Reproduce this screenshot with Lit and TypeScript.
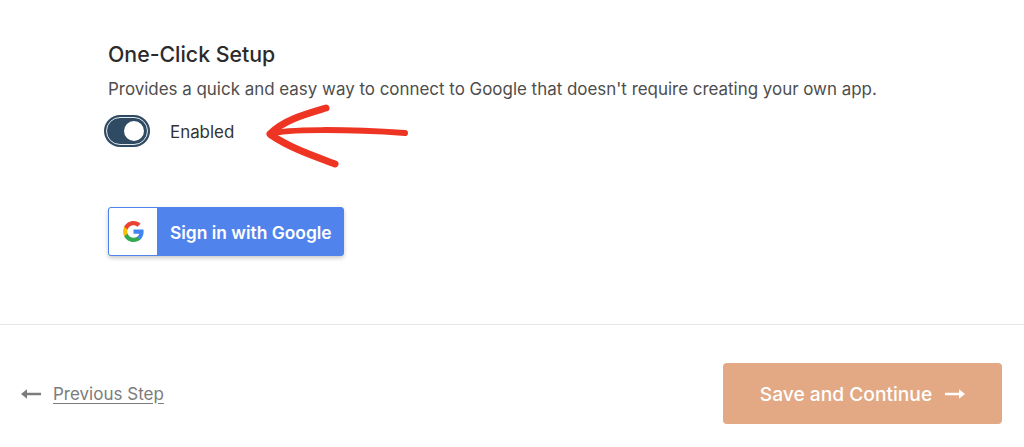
import { LitElement, html, css, svg } from "lit";
import { customElement } from "lit/decorators.js";

@customElement("app-root")
export class AppRoot extends LitElement {
  static styles = css`
    :host {
      display: block;
      position: relative;
      width: 1024px;
      height: 447px;
      background: #fff;
      overflow: hidden;
      font-family: Inter, "Liberation Sans", sans-serif;
      color: #444;
    }
    .content {
      height: 324px;
      box-sizing: border-box;
      padding: 41px 108px 0;
      display: flex;
      flex-direction: column;
      align-items: flex-start;
    }
    h2 {
      margin: 0;
      font-size: 21.3px;
      line-height: 26px;
      font-weight: 500;
      color: #2b2b2b;
    }
    .desc {
      margin: 9px 0 0;
      font-size: 16.93px;
      line-height: 26px;
      color: #4d4d4d;
      white-space: nowrap;
    }
    .toggle-row {
      display: flex;
      align-items: center;
      gap: 20px;
      margin: 12px 0 0 -4px;
      height: 33px;
      font-size: 16.9px;
      color: #333;
    }
    .toggle-label {
      padding-top: 2px;
    }
    .toggle {
      box-sizing: border-box;
      width: 46px;
      height: 32px;
      padding: 2px;
      border-radius: 16px;
      background: #2f4b63;
      display: flex;
    }
    .toggle-inner {
      box-sizing: border-box;
      flex: 1;
      border: 1.5px solid #e4e9ee;
      border-radius: 14px;
      background: #2f4b63;
      display: flex;
      align-items: center;
      justify-content: flex-end;
      padding-right: 3px;
    }
    .knob {
      width: 20px;
      height: 20px;
      border-radius: 50%;
      background: #fff;
    }
    .google {
      margin-top: 60px;
      box-sizing: border-box;
      width: 236px;
      height: 49px;
      display: flex;
      align-items: stretch;
      background: #5084ec;
      border: 1px solid #5084ec;
      border-radius: 3px;
      box-shadow: 0 2px 4px rgba(0, 0, 0, 0.22);
    }
    .g-box {
      width: 48px;
      background: #fff;
      border-radius: 2px 0 0 2px;
      display: flex;
      align-items: center;
      justify-content: center;
    }
    .g-label {
      flex: 1;
      display: flex;
      align-items: center;
      padding: 1px 0 0 13px;
      font-size: 17.4px;
      font-weight: 600;
      color: #fff;
      white-space: nowrap;
    }
    .footer {
      border-top: 1.5px solid #e6e6e6;
      box-sizing: border-box;
      height: 123px;
      padding: 38px 22px 0 21px;
      display: flex;
      justify-content: space-between;
      align-items: flex-start;
    }
    .prev {
      display: flex;
      align-items: center;
      gap: 12px;
      height: 61px;
      font-size: 17px;
      color: #7c7c7c;
    }
    .prev span {
      text-decoration: underline;
      text-underline-offset: 3px;
    }
    .next {
      box-sizing: border-box;
      width: 279px;
      height: 61px;
      border-radius: 4px;
      background: #e2a984;
      color: #fff;
      display: flex;
      align-items: center;
      justify-content: center;
      gap: 13px;
      font-size: 19.2px;
      font-weight: 500;
      white-space: nowrap;
    }
    .arrow {
      position: absolute;
      left: 0;
      top: 0;
      pointer-events: none;
    }
  `;

  render() {
    return html`
      <div class="content">
        <h2>One-Click Setup</h2>
        <p class="desc">Provides a quick and easy way to connect to Google that doesn't require creating your own app.</p>
        <div class="toggle-row">
          <div class="toggle"><div class="toggle-inner"><div class="knob"></div></div></div>
          <div class="toggle-label">Enabled</div>
        </div>
        <div class="google">
          <div class="g-box">
            <svg width="23" height="23" viewBox="0 0 48 48">
              <path fill="#4285F4" d="M45.1 24.5c0-1.6-.1-3.1-.4-4.5H24v8.5h11.8c-.5 2.7-2.1 5-4.4 6.6v5.5h7.1c4.2-3.8 6.6-9.5 6.6-16.1z"/>
              <path fill="#34A853" d="M24 46c5.9 0 10.9-2 14.5-5.3l-7.1-5.5c-2 1.3-4.5 2.1-7.4 2.1-5.7 0-10.5-3.8-12.2-9H4.5v5.7C8.1 41.1 15.5 46 24 46z"/>
              <path fill="#FBBC05" d="M11.8 28.3c-.4-1.3-.7-2.8-.7-4.3s.3-3 .7-4.3V14H4.5C3 17 2.2 20.4 2.2 24s.8 7 2.3 10l7.3-5.7z"/>
              <path fill="#EA4335" d="M24 10.7c3.2 0 6.1 1.1 8.4 3.3l6.3-6.3C34.9 4.2 29.9 2 24 2 15.5 2 8.1 6.9 4.5 14l7.3 5.7c1.7-5.2 6.5-9 12.2-9z"/>
            </svg>
          </div>
          <div class="g-label">Sign in with Google</div>
        </div>
      </div>
      <div class="footer">
        <div class="prev">
          <svg width="20" height="12" viewBox="0 0 20 12">
            <path d="M0 6 L6 1.2 V4.8 H20 V7.2 H6 V10.8 Z" fill="#7c7c7c"/>
          </svg>
          <span>Previous Step</span>
        </div>
        <div class="next">
          <div>Save and Continue</div>
          <svg width="20" height="12" viewBox="0 0 20 12">
            <path d="M20 6 L14 1.2 V4.8 H0 V7.2 H14 V10.8 Z" fill="#fff"/>
          </svg>
        </div>
      </div>
      <svg class="arrow" width="1024" height="447" viewBox="0 0 1024 447">
        ${svg`<g fill="none" stroke="#ee3524" stroke-linecap="round" stroke-linejoin="round">
          <path stroke-width="7" d="M326 108 C306 114 283 120 270 134"/>
          <path stroke-width="6" d="M270 134 C286 129 345 129 405 133"/>
          <path stroke-width="7" d="M271 135 C292 149 314 156 335 164"/>
        </g>`}
      </svg>
    `;
  }
}
